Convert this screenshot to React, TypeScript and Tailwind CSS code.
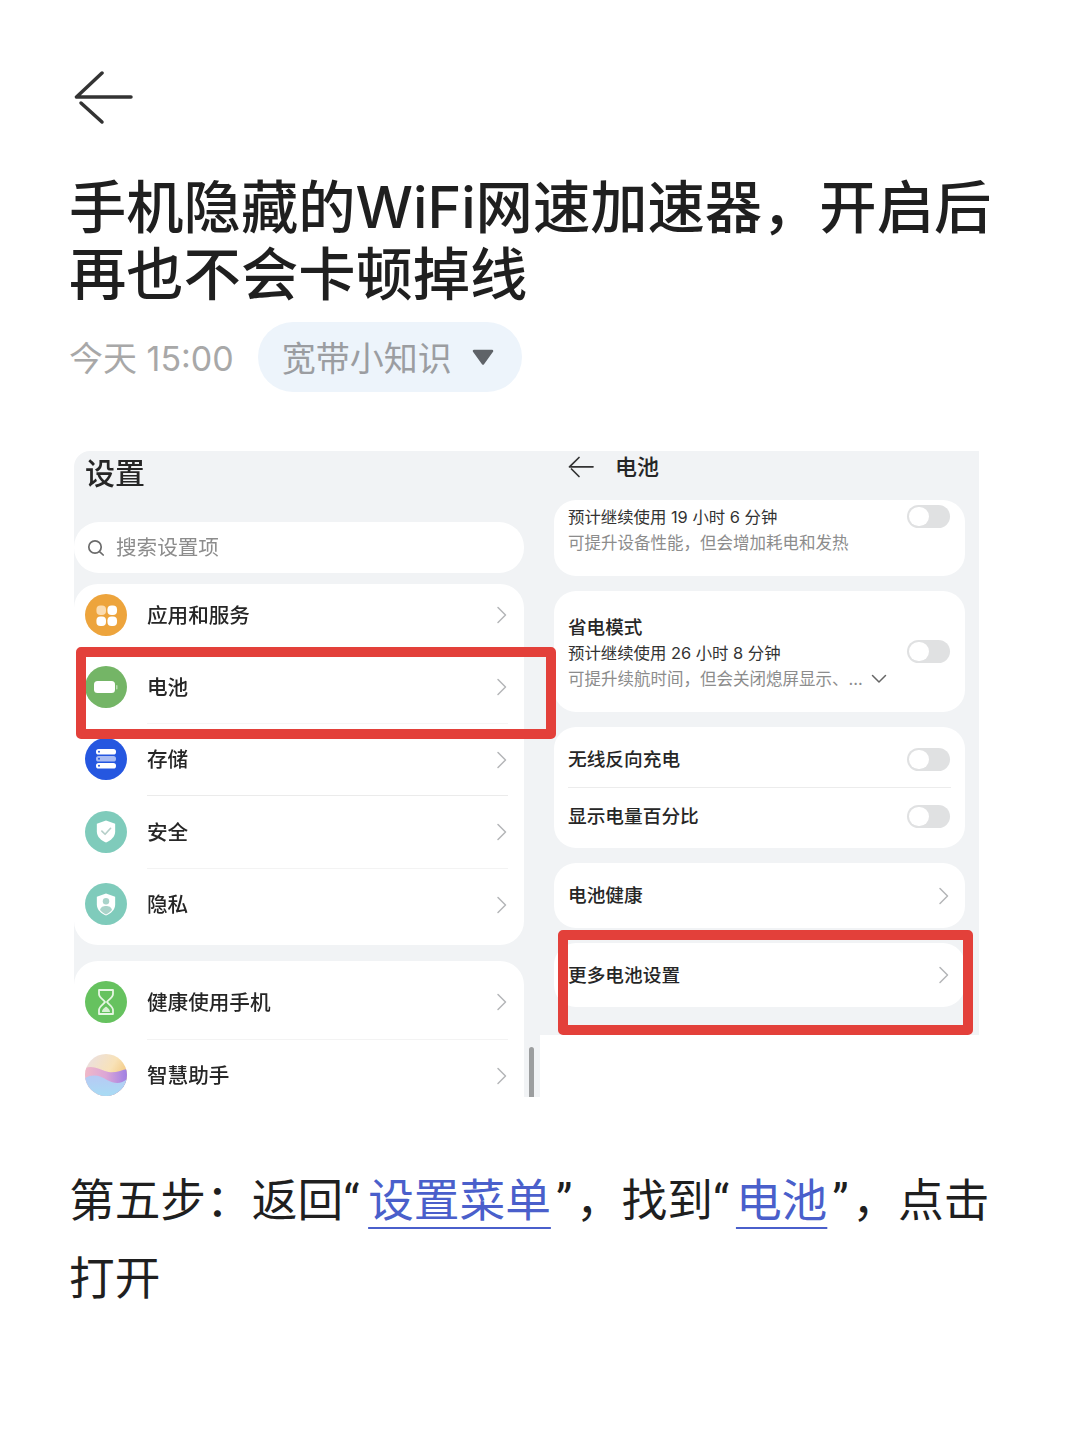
import React from "react";

const CJK = "font-['Inter','Noto_Sans_CJK_SC',sans-serif]";

function Chevron() {
  return (
    <svg width="12" height="18" viewBox="0 0 12 18" fill="none" className="shrink-0">
      <path d="M2 1.5 L9.5 9 L2 16.5" stroke="#b4b6b8" strokeWidth="1.5" strokeLinecap="round" strokeLinejoin="round" />
    </svg>
  );
}

function Toggle() {
  return (
    <div className="w-[43px] h-[23px] rounded-full bg-[#e0e1e2] shrink-0 p-[2px] flex mr-[1px]">
      <div className="w-[20px] h-[19px] rounded-full bg-white" />
    </div>
  );
}

function Circle({ bg, children }: { bg: string; children: React.ReactNode }) {
  return (
    <div className={`w-[42px] h-[42px] rounded-full shrink-0 flex items-center justify-center ${bg}`}>{children}</div>
  );
}

const AppsIcon = (
  <Circle bg="bg-[#eda43c]">
    <svg width="23" height="23" viewBox="0 0 24 24" fill="#fff">
      <rect x="1.5" y="1.5" width="10" height="10" rx="4.2" fill="#fbdcb0" />
      <rect x="13" y="1.5" width="10" height="10" rx="4.2" />
      <rect x="1.5" y="13" width="10" height="10" rx="4.2" />
      <rect x="13" y="13" width="10" height="10" rx="4.2" />
    </svg>
  </Circle>
);
const BatteryIcon = (
  <Circle bg="bg-[#74b566]">
    <svg width="26" height="16" viewBox="0 0 26 16" fill="#fff">
      <rect x="1" y="2" width="21" height="12" rx="3.5" />
      <rect x="23" y="6" width="1.5" height="4.5" rx="0.7" fill="#b9dab2" />
    </svg>
  </Circle>
);
const StorageIcon = (
  <Circle bg="bg-[#2557e0]">
    <svg width="24" height="22" viewBox="0 0 24 22">
      <rect x="2" y="1" width="20" height="5.5" rx="2.6" fill="#fff" />
      <rect x="2" y="8" width="20" height="5.5" rx="2.6" fill="#a9bcf3" />
      <rect x="2" y="15" width="20" height="5.5" rx="2.6" fill="#fff" />
      <circle cx="5" cy="3.7" r="1" fill="#2557e0" />
      <circle cx="5" cy="10.7" r="1" fill="#2557e0" />
      <circle cx="5" cy="17.7" r="1" fill="#2557e0" />
    </svg>
  </Circle>
);
const SafeIcon = (
  <Circle bg="bg-[#7fcbbb]">
    <svg width="22" height="25" viewBox="0 0 24 26">
      <path d="M12 1 L22 4.5 V13 C22 19 17 23 12 25 C7 23 2 19 2 13 V4.5 Z" fill="#fff" />
      <path d="M7.5 12.5 L11 16 L17 9.5" fill="none" stroke="#b6cfc9" strokeWidth="1.8" strokeLinecap="round" strokeLinejoin="round" />
    </svg>
  </Circle>
);
const PrivacyIcon = (
  <Circle bg="bg-[#7fcbbb]">
    <svg width="22" height="25" viewBox="0 0 24 26">
      <path d="M12 1 L22 4.5 V13 C22 19 17 23 12 25 C7 23 2 19 2 13 V4.5 Z" fill="#fff" />
      <circle cx="12" cy="9.5" r="3.5" fill="#a9d3c9" />
      <path d="M5.5 19 C6 15.5 9 14.5 12 14.5 C15 14.5 18 15.5 18.5 19 C16.5 21.5 14 23 12 24 C10 23 7.5 21.5 5.5 19 Z" fill="#a9d3c9" />
    </svg>
  </Circle>
);
const HealthIcon = (
  <Circle bg="bg-[#66c25f]">
    <svg width="20" height="28" viewBox="0 0 20 28" fill="none" stroke="#e6f6e3" strokeWidth="1.8" strokeLinejoin="round">
      <path d="M3 2 H17 V6 C17 9.5 12 12 11 14 C12 16 17 18.5 17 22 V26 H3 V22 C3 18.5 8 16 9 14 C8 12 3 9.5 3 6 Z" />
      <path d="M6 24 C6 21 9 19.5 10 18.5 C11 19.5 14 21 14 24 Z" fill="#d8f0d4" stroke="none" />
    </svg>
  </Circle>
);
const AssistantIcon = (
  <div className="w-[42px] h-[42px] rounded-full shrink-0 overflow-hidden">
    <svg width="42" height="42" viewBox="0 0 42 42">
      <defs>
        <linearGradient id="asTop" x1="0" y1="0" x2="1" y2="0.6">
          <stop offset="0" stopColor="#e8dfe8" />
          <stop offset="0.6" stopColor="#f8e2b8" />
          <stop offset="1" stopColor="#f2c374" />
        </linearGradient>
        <linearGradient id="asMid" x1="0" y1="0" x2="1" y2="0">
          <stop offset="0" stopColor="#f0b8c8" />
          <stop offset="0.5" stopColor="#dca6d6" />
          <stop offset="1" stopColor="#a080e4" />
        </linearGradient>
        <linearGradient id="asBot" x1="0" y1="0" x2="0" y2="1">
          <stop offset="0" stopColor="#b7c9f4" />
          <stop offset="1" stopColor="#a8dcf4" />
        </linearGradient>
      </defs>
      <rect width="42" height="42" fill="url(#asTop)" />
      <path d="M0 14 C8 11 14 15 20 17 C28 20 34 17 42 15 V42 H0 Z" fill="url(#asMid)" />
      <path d="M0 24 C8 19 16 22 22 26 C30 30 36 30 42 25 V42 H0 Z" fill="url(#asBot)" />
    </svg>
  </div>
);

function Row({
  icon,
  label,
  h,
  pb = "",
  divider = "",
}: {
  icon: React.ReactNode;
  label: string;
  h: string;
  pb?: string;
  divider?: string;
}) {
  return (
    <div className={`flex items-stretch pl-[11px] pr-[15px] ${h}`}>
      <div className={`flex items-center ${pb}`}>{icon}</div>
      <div className={`flex-1 ml-[20px] mr-[1px] flex items-center justify-between ${pb} ${divider}`}>
        <span className="text-[20.6px] leading-none pt-[2px] text-[#262626] font-medium">{label}</span>
        <Chevron />
      </div>
    </div>
  );
}

function RightRow({ label, children, h }: { label: string; children: React.ReactNode; h: string }) {
  return (
    <div className={`flex items-center justify-between ${h}`}>
      <span className="text-[18.7px] leading-none pt-[2px] text-[#262626] font-medium">{label}</span>
      {children}
    </div>
  );
}

export default function App() {
  return (
    <div className={`relative w-[1080px] h-[1439px] bg-white overflow-hidden ${CJK}`}>
      <div className="pl-[74px] pt-[71px]">
        <svg width="60" height="54" viewBox="0 0 60 54" fill="none" stroke="#333" strokeWidth="3.5" strokeLinecap="round" strokeLinejoin="round">
          <path d="M28 2 L2.5 26 H57" />
          <path d="M7 32 L28 51" />
        </svg>
      </div>

      <h1 className="mt-[49px] ml-[69px] mr-[70px] text-[57.3px] leading-[67px] font-medium text-[#1f1f1f]">
        手机隐藏的WiFi网速加速器，开启后
        <br />
        再也不会卡顿掉线
      </h1>

      <div className="mt-[14px] ml-[69px] flex items-center h-[70px]">
        <span className="text-[34px] text-[#a8a8a8] leading-none pt-[4px]">今天 15:00</span>
        <div className="ml-[24px] h-[70px] w-[264px] rounded-full bg-[#edf4fb] flex items-center pl-[24px]">
          <span className="text-[34px] leading-none pt-[3px] text-[#9b9da1]">宽带小知识</span>
          <svg width="24" height="17" viewBox="0 0 24 17" className="ml-[19px]">
            <path d="M3 2 H21 L12 14.5 Z" fill="#5f6368" stroke="#5f6368" strokeWidth="2.5" strokeLinejoin="round" />
          </svg>
        </div>
      </div>

      {/* embedded screenshot */}
      <div className="relative mt-[59px] ml-[74px] w-[905px] h-[646px] flex items-start blur-[0.4px]">
        <div className="w-[466px] h-[646px] bg-[#f1f3f5] rounded-tl-[16px] overflow-hidden relative">
          <div className="h-[71px] pl-[11px] pt-[4px] text-[30px] leading-[36px] font-medium text-[#262626]">设置</div>
          <div className="w-[450px] h-[51px] bg-white rounded-[25px] flex items-center pl-[13px]">
            <svg width="18" height="18" viewBox="0 0 18 18" fill="none" stroke="#6b6b6b" strokeWidth="1.7" strokeLinecap="round">
              <circle cx="8" cy="8" r="6.2" />
              <path d="M12.8 12.8 L16.2 16" />
            </svg>
            <span className="ml-[11px] text-[20.6px] leading-none pt-[2px] text-[#8c8c8c]">搜索设置项</span>
          </div>
          <div className="mt-[11px] w-[450px] h-[361px] bg-white rounded-[24px]">
            <Row icon={AppsIcon} label="应用和服务" h="h-[67px]" pb="pb-[5px]" />
            <Row icon={BatteryIcon} label="电池" h="h-[72px]" />
            <Row icon={StorageIcon} label="存储" h="h-[72px]" divider="border-t border-[#f5f5f5]" />
            <Row icon={SafeIcon} label="安全" h="h-[73px]" divider="border-t border-[#ebebeb]" />
            <Row icon={PrivacyIcon} label="隐私" h="h-[77px]" pb="pb-[5px]" divider="border-t border-[#f3f3f3]" />
          </div>
          <div className="mt-[16px] w-[450px] h-[136px] bg-white rounded-t-[24px] overflow-hidden">
            <Row icon={HealthIcon} label="健康使用手机" h="h-[78px]" pb="pt-[4px]" />
            <Row icon={AssistantIcon} label="智慧助手" h="h-[72px]" divider="border-t border-[#f3f3f3]" />
          </div>
          <div className="absolute left-[455px] top-[596px] w-[5px] h-[50px] bg-[#9c9e9f] rounded-t-full" />
        </div>

        <div className="w-[439px] h-[584px] bg-[#f1f3f5] pl-[14px] pr-[14px]">
          <div className="h-[49px] flex items-center pl-[14px] pb-[17px]">
            <svg width="26" height="22" viewBox="0 0 26 22" fill="none" stroke="#333" strokeWidth="1.7" strokeLinecap="round" strokeLinejoin="round">
              <path d="M11 1.5 L1.5 10.8 H25" />
              <path d="M3.5 13 L11 20.5" />
            </svg>
            <span className="ml-[21px] text-[22px] leading-none font-medium text-[#262626]">电池</span>
          </div>

          <div className="h-[76px] bg-white rounded-[22px] px-[14px] pt-[5px] flex justify-between">
            <div>
              <div className="h-[25px] flex items-center text-[16.4px] leading-none text-[#333]">预计继续使用 19 小时 6 分钟</div>
              <div className="h-[25px] flex items-center text-[16.5px] leading-none pt-[2px] text-[#8c8c8c]">可提升设备性能，但会增加耗电和发热</div>
            </div>
            <Toggle />
          </div>

          <div className="mt-[15px] h-[121px] bg-white rounded-[22px] px-[14px] flex justify-between items-center">
            <div className="pt-[3px]">
              <div className="h-[26px] flex items-center text-[18.6px] leading-none font-medium text-[#262626]">省电模式</div>
              <div className="h-[26px] flex items-center text-[16.4px] leading-none text-[#333]">预计继续使用 26 小时 8 分钟</div>
              <div className="h-[25px] flex items-center text-[16.5px] leading-none text-[#8c8c8c]">
                可提升续航时间，但会关闭熄屏显示、…
                <svg width="16" height="10" viewBox="0 0 16 10" fill="none" stroke="#666" strokeWidth="1.5" strokeLinecap="round" strokeLinejoin="round" className="ml-[8px]">
                  <path d="M1.5 1.5 L8 8 L14.5 1.5" />
                </svg>
              </div>
            </div>
            <Toggle />
          </div>

          <div className="mt-[15px] h-[121px] bg-white rounded-[22px] px-[14px]">
            <RightRow label="无线反向充电" h="h-[61px] pt-[5px] border-b border-[#ececec]">
              <Toggle />
            </RightRow>
            <RightRow label="显示电量百分比" h="h-[56px]">
              <Toggle />
            </RightRow>
          </div>

          <div className="mt-[15px] h-[65px] bg-white rounded-[22px] pl-[14px] pr-[15px] flex items-center justify-between">
            <span className="text-[18.7px] leading-none pt-[2px] font-medium text-[#262626]">电池健康</span>
            <Chevron />
          </div>

          <div className="mt-[15px] h-[64px] bg-white rounded-[22px] pl-[14px] pr-[15px] flex items-center justify-between">
            <span className="text-[18.7px] leading-none pt-[2px] font-medium text-[#262626]">更多电池设置</span>
            <Chevron />
          </div>
        </div>

        <div className="absolute left-[2px] top-[196px] w-[480px] h-[92px] border-[10px] border-[#e3403a] rounded-[5px]" />
        <div className="absolute left-[484px] top-[479px] w-[415px] h-[105px] border-[10px] border-[#e3403a] rounded-[5px]" />
      </div>

      <p className="mt-[65px] ml-[69px] mr-[70px] text-[45.7px] leading-[77px] text-[#1f1f1f]">
        第五步：返回<span className="font-['Roboto'] inline-block w-[25px]">“</span>
        <span className="text-[#4a5fcb] underline decoration-[1.5px] underline-offset-[10px]">设置菜单</span>
        <span className="font-['Roboto'] inline-block w-[25px] pl-[5px]">”</span>，找到<span className="font-['Roboto'] inline-block w-[23px]">“</span>
        <span className="text-[#4a5fcb] underline decoration-[1.5px] underline-offset-[10px]">电池</span>
        <span className="font-['Roboto'] inline-block w-[25px] pl-[5px]">”</span>，点击
        <br />
        打开
      </p>
    </div>
  );
}
